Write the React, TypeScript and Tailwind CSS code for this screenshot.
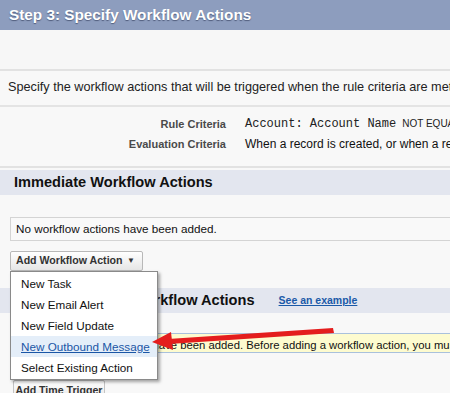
import React from 'react';

const font = { fontFamily: '"Liberation Sans", Arial, sans-serif' };

const menuItems = ['New Task', 'New Email Alert', 'New Field Update', 'New Outbound Message', 'Select Existing Action'];

export default function App() {
  return (
    <div className="relative w-[450px] h-[393px] overflow-hidden bg-[#f8f8f8] text-[#222]" style={font}>
      <div className="h-[30px] bg-[#8d9dbe] flex items-center pl-[9px]">
        <h2 className="text-[15.3px] font-bold text-white whitespace-nowrap [text-shadow:0_1px_1px_rgba(40,50,80,0.6)]">
          Step 3: Specify Workflow Actions
        </h2>
      </div>
      <div className="h-[41px] bg-[#f7f7f7] border-b-2 border-[#e2e2e2]" />

      <div className="h-[36px] flex items-center pl-[8px] border-b-2 border-[#e4e4e4] whitespace-nowrap">
        <span className="text-[12.7px] text-[#222]">
          Specify the workflow actions that will be triggered when the rule criteria are met.
        </span>
      </div>

      <div className="h-[61px] pt-[7px] border-b-2 border-[#e2e2e2] whitespace-nowrap">
        <div className="flex items-center h-[20px]">
          <div className="w-[226px] shrink-0 text-right text-[11px] font-bold text-[#4a4a4a]">Rule Criteria</div>
          <div className="pl-[19px] flex items-baseline gap-[6px]">
            <span className="text-[12px] text-[#222]" style={{ fontFamily: '"Liberation Mono", "Courier New", monospace' }}>
              Account: Account Name
            </span>
            <span className="text-[10px] text-[#222]">NOT EQUAL TO null</span>
          </div>
        </div>
        <div className="flex items-center h-[20px]">
          <div className="w-[226px] shrink-0 text-right text-[11px] font-bold text-[#4a4a4a]">Evaluation Criteria</div>
          <div className="pl-[19px] text-[12px] text-[#111]">
            When a record is created, or when a record is edited and did not previously meet the rule criteria
          </div>
        </div>
      </div>

      <div className="mt-[2px] h-[25px] bg-[#e3e6ef] flex items-center pl-[14px]">
        <h3 className="text-[14.6px] font-bold text-[#111] whitespace-nowrap">Immediate Workflow Actions</h3>
      </div>

      <div className="pt-[22px] pl-[10px]">
        <div className="h-[24px] border border-[#d4d4d4] border-r-0 bg-[#f9f9f9] flex items-center pl-[5px]">
          <span className="text-[11.7px] text-[#111] whitespace-nowrap">No workflow actions have been added.</span>
        </div>
      </div>

      <div className="pt-[10px] pl-[10px] h-[47px]">
        <button className="h-[20px] w-[133px] border border-[#b8b8b8] rounded-[2px] bg-gradient-to-b from-white to-[#e6e6e6] flex items-center justify-between pl-[5px] pr-[7px]">
          <span className="text-[10.6px] font-bold text-[#333] whitespace-nowrap">Add Workflow Action</span>
          <span className="text-[8px] text-[#333]">▼</span>
        </button>
      </div>

      <div className="h-[25px] bg-[#e3e6ef] flex items-center pl-[14px] whitespace-nowrap">
        <h3 className="text-[14.6px] font-bold text-[#111]">Time-Dependent Workflow Actions</h3>
        <a href="#" className="ml-[24px] text-[10.5px] font-bold text-[#1b5aa8] underline">See an example</a>
      </div>

      <div className="pt-[20px] pl-[13px]">
        <div className="h-[20px] bg-[#fdfbcf] border-t border-b border-l border-[#a9c1dc] flex items-center pt-[5px] pl-[35px] whitespace-nowrap">
          <span className="text-[11.3px] leading-none text-[#111]">
            No workflow actions have been added. Before adding a workflow action, you must have at least one time trigger defined.
          </span>
        </div>
      </div>

      <div className="pt-[27px] pl-[13px]">
        <button className="h-[20px] w-[92px] border border-[#c4c4c4] rounded-[2px] bg-gradient-to-b from-white to-[#e6e6e6] flex items-start justify-center pt-[2px]">
          <span className="text-[10.6px] font-bold text-[#333] whitespace-nowrap">Add Time Trigger</span>
        </button>
      </div>

      <ul className="absolute left-[10px] top-[271px] w-[148px] bg-white border border-[#8a8a8a] shadow-[2px_2px_3px_rgba(0,0,0,0.35)] py-[1px]">
        {menuItems.map(item => (
          <li
            key={item}
            className={`h-[21px] flex items-center pl-[10px] text-[11.7px] whitespace-nowrap ${item === 'New Outbound Message' ? 'bg-[#e4eef9] text-[#1a56a6] underline' : 'text-[#111]'}`}
          >
            {item}
          </li>
        ))}
      </ul>

      <svg className="absolute left-0 top-0 pointer-events-none" width="450" height="393" viewBox="0 0 450 393">
        <path d="M168 339 L333 328 L334 333 L169 344 Z" fill="#e41d1d" />
        <path d="M152 342 L171 332 L173 350 Z" fill="#e41d1d" />
      </svg>
    </div>
  );
}
